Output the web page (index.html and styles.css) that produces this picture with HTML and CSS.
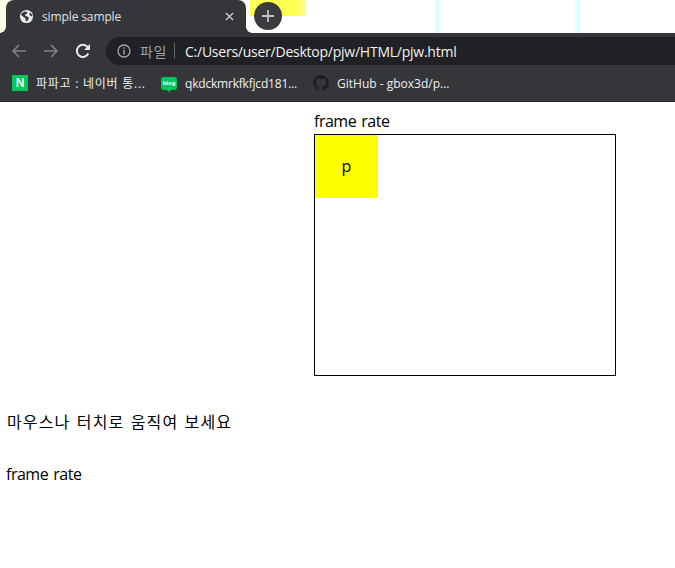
FILE: index.html
```html
<!DOCTYPE html>
<html lang="ko">
<head>
<meta charset="utf-8">
<title>simple sample</title>
<link rel="stylesheet" href="styles.css">
</head>
<body>
<header class="chrome">
  <div class="desk" aria-hidden="true">
    <span class="desk-left"></span>
    <span class="desk-yellow"></span>
    <span class="desk-line line-a"></span>
    <span class="desk-line line-b"></span>
  </div>
  <div class="tabstrip">
    <div class="tab">
      <svg class="globe" viewBox="0 0 16 16"><circle cx="8" cy="8" r="7" fill="#eceded"/><path d="M3 4.200 6 2.600l3 .6-1 2-2 1 1.800 1.600 2.400.6.200 2-2 2.800-1.200-.4-.4-3L4.400 8.200 2.200 6.400z" fill="#35363a"/><path d="M11.500 3.500 14 6l.2 2-2-.6-1.200-2z" fill="#35363a"/></svg>
      <span class="tab-title">simple sample</span>
      <svg class="tab-close" viewBox="0 0 10 10"><path d="M1 1l8 8M9 1l-8 8" stroke="#c8cacc" stroke-width="1.500" fill="none"/></svg>
    </div>
    <div class="newtab"><svg viewBox="0 0 12 12"><path d="M6 0v12M0 6h12" stroke="#bfc2c5" stroke-width="1.800" fill="none"/></svg></div>
  </div>
  <div class="toolbar">
    <svg class="nav" viewBox="0 0 16 16"><path d="M15 8H2M8 2 2 8l6 6" stroke="#808285" stroke-width="1.600" fill="none"/></svg>
    <svg class="nav" viewBox="0 0 16 16"><path d="M1 8h13M8 2l6 6-6 6" stroke="#808285" stroke-width="1.600" fill="none"/></svg>
    <svg class="nav" viewBox="0 0 16 16"><path d="M13.300 10.500A6 6 0 1 1 12.500 4L14 5.500" stroke="#e8eaed" stroke-width="2" fill="none"/><path d="M15 1v6H9z" fill="#e8eaed"/></svg>
    <div class="omnibox">
      <svg class="info" viewBox="0 0 14 14"><circle cx="7" cy="7" r="6" stroke="#a4a7ab" stroke-width="1.300" fill="none"/><path d="M7 6v4.500M7 3.300v1.500" stroke="#a4a7ab" stroke-width="1.500"/></svg>
      <span class="scheme">파일</span>
      <span class="divider"></span>
      <span class="url">C:/Users/user/Desktop/pjw/HTML/pjw.html</span>
    </div>
  </div>
  <div class="bookmarks">
    <div class="bookmark mark-1"><span class="naver">N</span><span class="name-ko">파파고 : 네이버 통...</span></div>
    <div class="bookmark mark-2"><span class="blog">blog</span><span class="name-tight">qkdckmrkfkfjcd181...</span></div>
    <div class="bookmark"><svg class="github" viewBox="0 0 16 16"><path fill="#1c1d20" d="M8 0a8 8 0 0 0-2.500 15.600c.4.100.5-.200.5-.400v-1.400c-2.200.500-2.700-1-2.700-1-.400-.900-.900-1.200-.900-1.200-.700-.500.100-.500.100-.500.800.100 1.200.800 1.200.800.700 1.200 1.900.900 2.300.700.100-.500.300-.900.500-1.100-1.800-.200-3.600-.900-3.600-4 0-.900.300-1.600.800-2.100-.100-.200-.400-1 .100-2.100 0 0 .700-.200 2.200.800a7.600 7.600 0 0 1 4 0c1.500-1 2.200-.800 2.200-.800.400 1.100.200 1.900.100 2.100.500.600.800 1.300.800 2.100 0 3.100-1.900 3.700-3.700 3.900.3.300.6.800.6 1.500v2.200c0 .2.100.5.600.4A8 8 0 0 0 8 0z"/></svg><span>GitHub - gbox3d/p...</span></div>
  </div>
</header>
<main class="page">
  <section class="stage-wrap">
    <div class="label">frame rate</div>
    <div class="stage"><div class="sprite">p</div></div>
  </section>
  <p class="hint">마우스나 터치로 움직여 보세요</p>
  <p class="rate">frame rate</p>
</main>
</body>
</html>
```

FILE: styles.css
```css
* { box-sizing: border-box; }
html, body { margin: 0; padding: 0; background: #fff; }
body {
  width: 675px;
  height: 568px;
  overflow: hidden;
  font-family: "Open Sans", "Noto Sans CJK KR", sans-serif;
  color: #000;
}
.chrome { position: relative; height: 102px; background: #35363a; border-bottom: 1px solid #26272a; }
.desk { position: absolute; left: 0; top: 0; width: 675px; height: 33px; background: #fff; overflow: hidden; }
.desk-left { position: absolute; left: 0; top: 0; width: 8px; height: 33px; background: #fbfde8; }
.desk-yellow {
  position: absolute;
  left: 250px;
  top: 0;
  width: 56px;
  height: 16px;
  background: linear-gradient(90deg, #fdff55, #fcff4a 80%, #fdff9a);
}
.desk-line { position: absolute; top: 0; width: 6px; height: 33px; background: linear-gradient(90deg, #f2feff, #d6fbfd 50%, #f2feff); }
.line-a { left: 435px; }
.line-b { left: 575px; }
.tabstrip { position: relative; display: flex; align-items: flex-start; height: 33px; }
.tab {
  position: relative;
  display: flex;
  align-items: center;
  width: 240px;
  height: 33px;
  margin-left: 6px;
  padding: 0 10px 1px 13px;
  background: #35363a;
  border-radius: 8px 8px 0 0;
}
.tab::before,
.tab::after {
  content: "";
  position: absolute;
  bottom: 0;
  width: 6px;
  height: 6px;
}
.tab::before { left: -6px; background: radial-gradient(circle at 0 0, transparent 5.500px, #35363a 6px); }
.tab::after { right: -6px; background: radial-gradient(circle at 100% 0, transparent 5.500px, #35363a 6px); }
.globe { width: 15px; height: 15px; flex: none; }
.tab-title {
  flex: 1;
  margin-left: 8px;
  font-size: 12px;
  letter-spacing: -.12px;
  color: #dfe1e4;
}
.tab-close { width: 9px; height: 9px; flex: none; margin-right: 2px; }
.newtab {
  position: relative;
  display: flex;
  align-items: center;
  justify-content: center;
  width: 28px;
  height: 28px;
  margin: 2px 0 0 8px;
  border-radius: 50%;
  background: #3a3b3f;
}
.newtab svg { width: 12px; height: 12px; }
.toolbar { display: flex; align-items: center; height: 32px; padding: 4px 0 0 11px; }
.nav { width: 16px; height: 16px; flex: none; margin-right: 16px; }
.omnibox {
  display: flex;
  align-items: center;
  flex: 1;
  height: 28px;
  margin-left: -1px;
  padding-left: 11px;
  background: #202124;
  border-radius: 14px 0 0 14px;
}
.info { width: 14px; height: 14px; flex: none; }
.scheme { margin-left: 9px; font-size: 14px; letter-spacing: .6px; color: #9aa0a6; }
.divider { width: 1px; height: 16px; margin: 0 10px 0 7px; background: #5f6368; }
.url { font-size: 14px; letter-spacing: -.24px; color: #f1f3f4; white-space: nowrap; }
.bookmarks { display: flex; align-items: center; height: 36px; padding-left: 12px; }
.bookmark { display: flex; align-items: center; gap: 8px; font-size: 12px; color: #eef0f2; white-space: nowrap; }
.mark-1 { width: 149px; }
.mark-2 { width: 152px; }
.name-ko { letter-spacing: .75px; }
.name-tight { letter-spacing: -.2px; }
.naver {
  display: flex;
  align-items: center;
  justify-content: center;
  width: 16px;
  height: 16px;
  background: #03c75a;
  color: #fff;
  font: 700 12px "Liberation Sans", sans-serif;
}
.blog {
  position: relative;
  display: flex;
  align-items: center;
  justify-content: center;
  width: 16px;
  height: 13px;
  background: #03c75a;
  border-radius: 3px;
  color: #fff;
  font: 700 6px "Liberation Sans", sans-serif;
}
.blog::after {
  content: "";
  position: absolute;
  left: 6px;
  top: 13px;
  border: 2px solid transparent;
  border-top-color: #03c75a;
}
.github { width: 16px; height: 16px; }
.page { padding: 8px 6px 0; font-size: 16px; line-height: 22px; }
.stage-wrap { margin-left: 308px; }
.label, .rate { letter-spacing: -.5px; word-spacing: 1.500px; }
.label { height: 24px; }
.stage { width: 302px; height: 242px; border: 1px solid #000; }
.sprite {
  display: flex;
  align-items: center;
  justify-content: center;
  width: 63px;
  height: 63px;
  padding-bottom: 2px;
  background: #ff0;
}
.hint { margin: 35px 0 0 1px; letter-spacing: 1.150px; word-spacing: 1px; }
.rate { margin: 30px 0 0; }
```
